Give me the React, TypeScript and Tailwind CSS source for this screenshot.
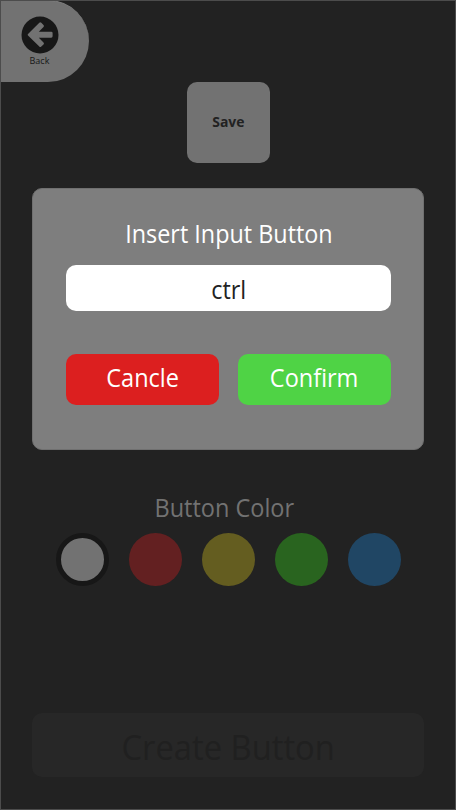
const colors = [
  { name: "White", cls: "bg-[#727272] border-[5px] border-[#171717]" },
  { name: "Red", cls: "bg-[#632021]" },
  { name: "Yellow", cls: "bg-[#645d20]" },
  { name: "Green", cls: "bg-[#29641f]" },
  { name: "Blue", cls: "bg-[#204664]" },
];

function BackIcon() {
  return (
    <svg width="38" height="38" viewBox="0 0 38 38" className="shrink-0">
      <circle cx="19" cy="19" r="18.5" fill="#171717" />
      <path
        d="M7 18.1 18.3 6.8Q19.3 5.8 20.3 6.8L22.5 9Q23.5 10 22.5 11L17.8 15.7H30.2Q31.6 15.7 31.6 17.1V20.3Q31.6 21.7 30.2 21.7H17.8L22.5 26.4Q23.5 27.4 22.5 28.4L20.3 30.6Q19.3 31.6 18.3 30.6L7 19.5Q6.3 18.8 7 18.1Z"
        fill="#727272"
      />
    </svg>
  );
}

function InsertDialog() {
  return (
    <div
      role="dialog"
      className="absolute top-[187px] left-[31px] flex h-[262px] w-[392px] flex-col rounded-[10px] border border-[#707070] bg-[#7e7e7e] pt-[27px] pr-8 pl-[33px]"
    >
      <h2 className="h-[34px] text-center text-[25px] leading-[34px] whitespace-nowrap text-white">
        <span className="inline-block scale-x-[0.935]">Insert Input Button</span>
      </h2>
      <div className="mt-[15px] h-[46px] shrink-0 rounded-[10px] bg-white text-center text-[25px] leading-[48px] text-[#222]">
        <span className="inline-block scale-x-[0.935]">ctrl</span>
      </div>
      <div className="mt-[43px] flex justify-between text-[25px] leading-[47px] text-white">
        <button className="flex h-[51px] w-[153px] justify-center rounded-[10px] bg-[#dc1f1f]">
          <span className="inline-block scale-x-[0.94]">Cancle</span>
        </button>
        <button className="flex h-[51px] w-[153px] justify-center rounded-[10px] bg-[#4fd345]">
          <span className="inline-block scale-x-[0.94]">Confirm</span>
        </button>
      </div>
    </div>
  );
}

export default function App() {
  return (
    <main className="relative flex h-[810px] w-[456px] flex-col overflow-hidden border border-[#4c4c4c] bg-[#222] font-['Open_Sans','Noto_Sans',sans-serif]">
      <button className="-mt-px -ml-px flex h-[82px] w-[89px] flex-col items-center rounded-r-[41px] border-t border-l border-[#7e7e7e] bg-[#727272] pt-[15px] pr-[11px] text-[#171717]">
        <BackIcon />
        <span className="scale-x-[0.95] text-[9.5px] leading-[14px]">Back</span>
      </button>
      <div className="flex h-[81px] w-[83px] items-center justify-center self-center rounded-[10px] bg-[#727272] pb-0.5 text-[15px] font-bold text-[#222]">
        <span className="inline-block scale-x-[0.93]">Save</span>
      </div>
      <h3 className="mt-[327px] h-[34px] pr-[7px] text-center text-[25px] leading-[34px] text-[#727272]">
        <span className="inline-block scale-x-[0.94]">Button Color</span>
      </h3>
      <div className="mt-[9px] flex justify-between pr-[54px] pl-[55px]">
        {colors.map((c) => (
          <button key={c.name} aria-label={c.name} className={"size-[53px] rounded-full " + c.cls} />
        ))}
      </div>
      <button className="mx-[31px] mt-[127px] flex h-16 justify-center rounded-[10px] bg-[#272727] text-[35px] leading-[68px] text-[#202020]">
        <span className="inline-block scale-x-[0.935]">Create Button</span>
      </button>
      <InsertDialog />
    </main>
  );
}
